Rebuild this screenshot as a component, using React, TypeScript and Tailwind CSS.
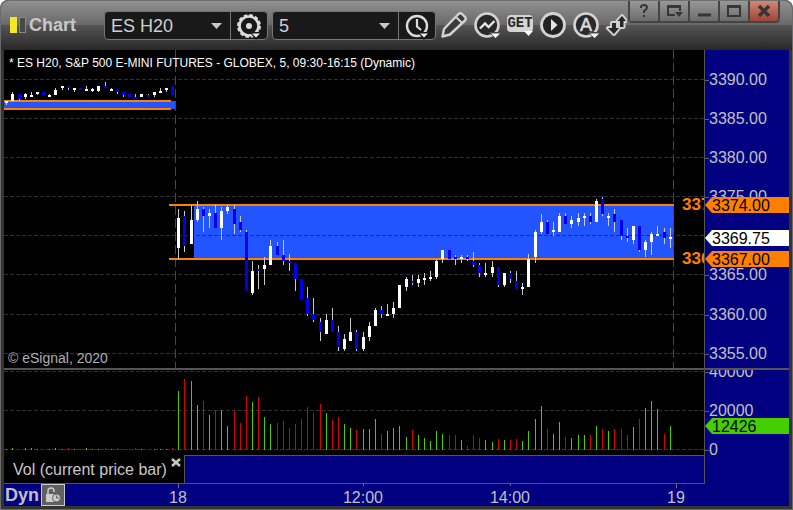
import type { ReactNode } from "react";

type Candle = [x: number, high: number, low: number, top: number, bottom: number, up: number];
type Bar = [x: number, top: number, up: number];

const candles: Candle[] = [
  [6, 101, 105, 101, 103, 1],
  [12, 92, 101, 94, 101, 1],
  [19, 94, 101, 94, 99, 0],
  [25, 93, 99, 94, 97, 1],
  [31, 92, 97, 95, 97, 1],
  [37, 92, 95, 92, 94, 1],
  [43, 92, 95, 92, 95, 0],
  [49, 94, 97, 95, 97, 1],
  [55, 88, 95, 90, 95, 1],
  [62, 86, 90, 86, 88, 1],
  [68, 86, 90, 86, 88, 0],
  [74, 88, 92, 88, 90, 1],
  [80, 88, 90, 88, 90, 0],
  [86, 86, 91, 89, 91, 1],
  [92, 88, 92, 89, 91, 1],
  [98, 86, 92, 86, 91, 1],
  [105, 82, 88, 86, 88, 0],
  [111, 88, 91, 89, 91, 1],
  [117, 90, 94, 90, 92, 0],
  [123, 92, 97, 92, 95, 0],
  [129, 94, 97, 94, 97, 0],
  [135, 94, 99, 97, 99, 0],
  [141, 94, 97, 94, 97, 1],
  [148, 94, 97, 95, 97, 0],
  [154, 92, 97, 92, 95, 1],
  [160, 88, 93, 91, 93, 1],
  [166, 88, 92, 88, 90, 1],
  [172, 86, 95, 86, 95, 0],
  [178, 209, 259, 218, 248, 1],
  [184, 211, 252, 216, 246, 0],
  [191, 205, 244, 220, 244, 1],
  [197, 201, 222, 209, 220, 1],
  [203, 207, 232, 209, 216, 0],
  [209, 209, 228, 213, 216, 1],
  [215, 205, 228, 213, 228, 0],
  [221, 207, 240, 211, 228, 1],
  [227, 205, 214, 207, 211, 1],
  [234, 205, 234, 209, 224, 0],
  [240, 216, 232, 222, 230, 0],
  [246, 230, 291, 232, 291, 0],
  [252, 261, 295, 271, 293, 1],
  [258, 265, 289, 269, 271, 0],
  [264, 257, 285, 265, 269, 1],
  [270, 240, 265, 246, 265, 1],
  [277, 242, 255, 246, 255, 0],
  [283, 240, 265, 255, 261, 0],
  [289, 254, 271, 261, 263, 0],
  [295, 263, 291, 263, 279, 0],
  [301, 279, 300, 279, 300, 0],
  [307, 287, 316, 298, 314, 0],
  [313, 298, 322, 314, 320, 0],
  [320, 318, 341, 322, 332, 0],
  [326, 314, 334, 320, 334, 1],
  [332, 308, 332, 320, 332, 0],
  [338, 326, 351, 332, 347, 0],
  [344, 334, 351, 339, 349, 1],
  [350, 318, 341, 332, 341, 1],
  [356, 330, 351, 332, 349, 0],
  [363, 332, 351, 337, 349, 1],
  [369, 322, 341, 326, 337, 1],
  [375, 308, 326, 310, 326, 1],
  [381, 306, 318, 310, 314, 0],
  [387, 304, 316, 314, 316, 1],
  [393, 302, 318, 308, 314, 1],
  [399, 285, 308, 285, 308, 1],
  [406, 277, 291, 279, 287, 1],
  [412, 275, 285, 281, 283, 0],
  [418, 275, 287, 279, 283, 1],
  [424, 273, 285, 278, 280, 1],
  [430, 271, 281, 277, 279, 1],
  [436, 259, 279, 261, 277, 1],
  [442, 250, 263, 250, 259, 1],
  [449, 250, 259, 250, 259, 0],
  [455, 255, 265, 257, 259, 0],
  [461, 255, 263, 257, 259, 1],
  [467, 255, 261, 257, 259, 0],
  [473, 252, 267, 261, 265, 0],
  [479, 263, 277, 265, 273, 0],
  [485, 263, 277, 273, 275, 1],
  [492, 261, 277, 267, 273, 1],
  [498, 267, 287, 267, 285, 0],
  [504, 273, 287, 273, 285, 1],
  [510, 271, 283, 273, 279, 0],
  [516, 271, 289, 281, 289, 0],
  [522, 283, 295, 287, 289, 1],
  [528, 254, 287, 259, 287, 1],
  [535, 230, 263, 232, 257, 1],
  [541, 214, 234, 222, 232, 1],
  [547, 220, 234, 222, 234, 0],
  [553, 222, 236, 230, 232, 1],
  [559, 213, 232, 216, 232, 1],
  [565, 213, 224, 216, 224, 0],
  [571, 216, 228, 220, 224, 1],
  [578, 213, 226, 218, 222, 1],
  [584, 213, 226, 216, 218, 1],
  [590, 213, 224, 216, 222, 0],
  [596, 199, 222, 201, 222, 1],
  [602, 197, 216, 199, 214, 0],
  [608, 213, 226, 216, 218, 1],
  [614, 209, 232, 214, 222, 0],
  [621, 220, 240, 220, 236, 0],
  [627, 228, 242, 236, 238, 0],
  [633, 226, 244, 226, 240, 1],
  [639, 226, 252, 226, 250, 0],
  [645, 240, 257, 242, 250, 1],
  [651, 232, 255, 234, 242, 1],
  [657, 226, 236, 234, 236, 1],
  [664, 228, 244, 232, 238, 0],
  [670, 228, 248, 237, 239, 1],
];

const volume: Bar[] = [
  [6, 449, 1], [12, 448, 1], [19, 449, 0], [25, 448, 1], [31, 448, 1], [37, 449, 1], [43, 449, 0],
  [49, 449, 1], [55, 448, 1], [62, 449, 1], [68, 448, 0], [74, 449, 1], [80, 449, 0], [86, 448, 1],
  [92, 449, 1], [98, 449, 1], [105, 448, 0], [111, 449, 1], [117, 448, 0], [123, 449, 0], [129, 449, 0],
  [135, 448, 0], [141, 449, 1], [148, 449, 0], [154, 449, 1], [160, 449, 1], [166, 449, 1], [172, 448, 0],
  [178, 391, 1], [184, 379, 0], [191, 381, 1], [197, 405, 1], [203, 401, 0], [209, 415, 1], [215, 410, 0],
  [221, 410, 1], [227, 426, 1], [234, 411, 0], [240, 423, 0], [246, 396, 0], [252, 402, 1], [258, 397, 0],
  [264, 417, 1], [270, 424, 1], [277, 423, 0], [283, 421, 0], [289, 428, 0], [295, 424, 0], [301, 419, 0],
  [307, 407, 0], [313, 413, 0], [320, 404, 0], [326, 413, 1], [332, 420, 0], [338, 417, 0], [344, 424, 1],
  [350, 428, 1], [356, 430, 0], [363, 429, 1], [369, 429, 1], [375, 419, 1], [381, 434, 0], [387, 431, 1],
  [393, 428, 1], [399, 426, 1], [406, 437, 1], [412, 430, 0], [418, 435, 1], [424, 438, 1], [430, 441, 1],
  [436, 431, 1], [442, 434, 1], [449, 435, 0], [455, 435, 0], [461, 440, 1], [467, 446, 0], [473, 435, 0],
  [479, 438, 0], [485, 440, 1], [492, 442, 1], [498, 439, 0], [504, 440, 1], [510, 440, 0], [516, 439, 0],
  [522, 441, 1], [528, 431, 1], [535, 419, 1], [541, 406, 1], [547, 429, 0], [553, 434, 1], [559, 422, 1],
  [565, 437, 0], [571, 438, 1], [578, 435, 1], [584, 435, 1], [590, 435, 0], [596, 426, 1], [602, 429, 0],
  [608, 431, 1], [614, 429, 0], [621, 429, 0], [627, 435, 0], [633, 427, 1], [639, 419, 0], [645, 408, 1],
  [651, 401, 1], [657, 409, 1], [664, 434, 0], [670, 426, 1],
];

const priceTicks: [number, string][] = [
  [79, "3390.00"],
  [118, "3385.00"],
  [157, "3380.00"],
  [196, "3375.00"],
  [235, "3370.00"],
  [274, "3365.00"],
  [314, "3360.00"],
  [353, "3355.00"],
];

const volumeTicks: [number, string][] = [
  [371, "40000"],
  [410, "20000"],
  [449, "0"],
];

type GridProps = { ys: number[] };

const Grid = ({ ys }: GridProps) => (
  <>
    {ys.map((y) => (
      <line key={y} x1="4" x2="704" y1={y + 0.5} y2={y + 0.5} stroke="#303030" strokeDasharray="4 2" />
    ))}
  </>
);

const PricePlot = () => (
  <svg
    className="block h-full w-full"
    viewBox="4 50 700 318"
    preserveAspectRatio="none"
    shapeRendering="crispEdges"
  >
    <rect x="4" y="102" width="167" height="6" fill="#2255ff" />
    <rect x="171" y="101" width="5" height="8" fill="#2255ff" />
    <rect x="194" y="206" width="480" height="52" fill="#2255ff" />
    <Grid ys={priceTicks.map(([y]) => y)} />
    {[175, 673].map((x) => (
      <line key={x} x1={x + 0.5} x2={x + 0.5} y1="50" y2="368" stroke="#484848" strokeDasharray="9 4" />
    ))}
    <g fill="#ff8000">
      <rect x="4" y="100" width="167" height="2" />
      <rect x="4" y="108" width="167" height="2" />
      <rect x="169" y="204" width="505" height="2" />
      <rect x="169" y="258" width="505" height="2" />
    </g>
    {candles.map(([x, high, low, top, bottom, up]) => (
      <g key={x}>
        <rect x={x} y={high} width="1" height={low - high} fill="#c8c8c8" />
        <rect x={x - 1} y={top} width="3" height={bottom - top} fill={up ? "#fff" : "#0000f0"} />
      </g>
    ))}
  </svg>
);

const VolumePlot = () => (
  <svg
    className="block h-full w-full"
    viewBox="4 370 700 85"
    preserveAspectRatio="none"
    shapeRendering="crispEdges"
  >
    <Grid ys={volumeTicks.map(([y]) => y)} />
    {volume.map(([x, top, up]) => (
      <rect key={x} x={x} y={top} width="1" height={450 - top} fill={up ? "#44d000" : "#d80000"} />
    ))}
  </svg>
);

type AxisTag = { y: number; label: string; fill: string };
type AxisProps = { viewBox: string; ticks: [number, string][]; tags: AxisTag[] };

const Axis = ({ viewBox, ticks, tags }: AxisProps) => (
  <svg className="block h-full w-full text-base" viewBox={viewBox} preserveAspectRatio="xMinYMin meet">
    {ticks.map(([y, label]) => (
      <g key={label}>
        <rect x="705" y={y + 1} width="4" height="1" fill="#606060" />
        <text x="709" y={y + 6} fill="#c0c0c0">
          {label}
        </text>
      </g>
    ))}
    {tags.map(({ y, label, fill }) => (
      <g key={label}>
        <path d={`M705 ${y + 8}l7-8h77v16h-77z`} fill={fill} />
        <text x="712" y={y + 14} fill="#000">
          {label}
        </text>
      </g>
    ))}
  </svg>
);

type IconProps = { children: ReactNode; label: string; width?: string };

const ToolButton = ({ children, label, width = "w-8" }: IconProps) => (
  <button aria-label={label} className={`flex h-8 shrink-0 items-center justify-center ${width}`}>
    {children}
  </button>
);

const svgProps = { width: 28, height: 28, viewBox: "0 0 28 28", fill: "none" };

const GearIcon = () => (
  <svg {...svgProps}>
    <circle cx="14" cy="14" r="9.5" stroke="#dcdcdc" strokeWidth="2.600" />
    <circle cx="14" cy="14" r="11" stroke="#dcdcdc" strokeWidth="2" strokeDasharray="3.600 2.160" />
    <circle cx="14" cy="14" r="3" fill="#dcdcdc" />
    <path d="M14.500 20H28l-7 8z" fill="#191919" />
    <path d="M17 21.500h8l-4 4z" fill="#eee" />
  </svg>
);

const ClockIcon = () => (
  <svg {...svgProps}>
    <circle cx="14" cy="14" r="10" stroke="#dcdcdc" strokeWidth="2.400" />
    <path d="M14 7v7.500l4 3.500" stroke="#dcdcdc" strokeWidth="2.200" />
    <path d="M14.500 20H28l-7 8z" fill="#191919" />
    <path d="M17 21.500h8l-4 4z" fill="#eee" />
  </svg>
);

const PencilIcon = () => (
  <svg {...svgProps}>
    <path
      d="M2.500 25.500l1.500-7.500L18.500 3q2-1.500 3.500 0l3 3q1.500 1.500 0 3.500L10 23.500z"
      fill="#3a3a3a"
      stroke="#d4d4d4"
      strokeWidth="2.400"
      strokeLinejoin="round"
    />
    <path d="M16.500 6.500l5.500 5.500" stroke="#d4d4d4" strokeWidth="2" />
  </svg>
);

const StudyIcon = () => (
  <svg {...svgProps}>
    <circle cx="14" cy="14" r="11.500" fill="#2a2a2a" stroke="#d4d4d4" strokeWidth="2.600" />
    <path d="M7 17.500l5-5 3.500 3.500 6-6" stroke="#e8e8e8" strokeWidth="2.400" />
    <path d="M15.500 21H28v2l-5 5z" fill="#484848" />
    <path d="M18 22.500h9l-4.500 4.500z" fill="#fff" />
  </svg>
);

const PlayIcon = () => (
  <svg {...svgProps}>
    <circle cx="14" cy="14" r="11.500" fill="#222" stroke="#d4d4d4" strokeWidth="2.800" />
    <path d="M12 8l6.500 6-6.500 6z" fill="#e4e4e4" />
  </svg>
);

const AlertIcon = () => (
  <svg {...svgProps}>
    <circle cx="14" cy="14" r="11.500" fill="#2a2a2a" stroke="#d4d4d4" strokeWidth="2.600" />
    <text x="14" y="20" textAnchor="middle" fontSize="18" fill="#dcdcdc" stroke="#dcdcdc" strokeWidth="0.600">
      A
    </text>
    <path d="M15.500 21H28v2l-5 5z" fill="#484848" />
    <path d="M18 22.500h9l-4.500 4.500z" fill="#fff" />
  </svg>
);

const swapPath = "M17 4l4 5h-2.500v6H15V9h-2.500zM7 11h4v5h3l-5 6-6-6h4z";

const SwapIcon = () => (
  <svg width="24" height="28" viewBox="-2 -1 24 28" strokeLinejoin="round">
    <path d={swapPath} fill="#d0d0d0" stroke="#d0d0d0" strokeWidth="4" />
    <path d={swapPath} fill="#262626" />
  </svg>
);

type WindowButtonProps = { children: ReactNode; label: string; className?: string };

const WindowButton = ({
  children,
  label,
  className = "border-r-2 bg-linear-to-b from-[#989898] to-[#6c6c6c]",
}: WindowButtonProps) => (
  <button
    aria-label={label}
    className={`flex h-5 w-[30px] items-center justify-center border-[#444] ${className}`}
  >
    <svg width="18" height="16" viewBox="0 0 18 16" fill="none" stroke="#363636" strokeWidth="2">
      {children}
    </svg>
  </button>
);

type PickerProps = { label: string; value: string; action: string; icon: ReactNode };

const Picker = ({ label, value, action, icon }: PickerProps) => (
  <div className="mt-[10px] flex h-[29px] w-[164px] shrink-0 rounded border border-[#777] bg-[#191919]">
    <div className="relative flex-1 border-r border-[#777]">
      <select
        aria-label={label}
        className="h-full w-full appearance-none bg-transparent pl-[6px] text-lg leading-none text-[#d0d0d0]"
      >
        <option>{value}</option>
      </select>
      <svg className="pointer-events-none absolute top-[11px] right-2" width="11" height="6" viewBox="0 0 11 6">
        <path d="M0 0h11L5.500 6z" fill="#c8c8c8" />
      </svg>
    </div>
    <button aria-label={action} className="flex w-9 items-center justify-center">
      {icon}
    </button>
  </div>
);

const Header = () => (
  <header className="flex h-[50px] items-start rounded-t-lg border-t border-[#707070] bg-[linear-gradient(#909090,#686868_50%,#545454_50%,#282828)] pl-[9px]">
    <div className="flex h-12 shrink-0 items-center gap-[2px] text-lg font-bold text-[#c8c8c8]">
      <span className="h-4 w-[7px] bg-[#f5e62a]" />
      <span className="h-4 w-[7px] border border-[#888] bg-[#484848]" />
      <h1 className="ml-[1px] w-[75px]">Chart</h1>
    </div>
    <Picker label="Symbol" value="ES H20" action="Settings" icon={<GearIcon />} />
    <div className="w-1 shrink-0" />
    <Picker label="Interval" value="5" action="Time template" icon={<ClockIcon />} />
    <div className="mt-2 ml-[2px] flex shrink-0 gap-[1px]">
      <ToolButton label="Draw">
        <PencilIcon />
      </ToolButton>
      <ToolButton label="Studies">
        <StudyIcon />
      </ToolButton>
      <ToolButton label="GET">
        <span className="relative mb-[3px] h-[17px] w-[26px] rounded bg-[#d4d4d4] text-center font-['Liberation_Mono',monospace] text-sm leading-[17px] font-bold text-[#2a2a2a]">
          GET
          <svg className="absolute top-4 right-0" width="9" height="5" viewBox="0 0 9 5">
            <path d="M0 0h9L4.500 5z" fill="#fff" />
          </svg>
        </span>
      </ToolButton>
      <ToolButton label="Play">
        <PlayIcon />
      </ToolButton>
      <ToolButton label="Alerts">
        <AlertIcon />
      </ToolButton>
      <ToolButton label="Swap" width="w-6">
        <SwapIcon />
      </ToolButton>
    </div>
    <div className="mr-3 ml-auto flex shrink-0 rounded-b border-b-2 border-l-2 border-[#444]">
      <WindowButton label="Help">
        <path d="M6 5V4q0-2 3-2t3 2.500q0 1.500-3 3.500v2M9 12v2" />
      </WindowButton>
      <WindowButton label="Window menu">
        <path d="M10 12H3V3h12v5" />
        <path d="M2 4h14" />
        <path d="M10 9h8l-4 5z" fill="#363636" stroke="none" />
      </WindowButton>
      <WindowButton label="Minimize">
        <path d="M3 12h13" strokeWidth="3" />
      </WindowButton>
      <WindowButton label="Maximize">
        <path d="M3 3h12v10H3zM3 4h12" />
      </WindowButton>
      <WindowButton label="Close" className="rounded-br border-r-2 bg-linear-to-b from-[#d08878] to-[#a04434]">
        <path d="M4 3l10 10M14 3L4 13" strokeWidth="3.500" />
      </WindowButton>
    </div>
  </header>
);

const App = () => {
  return (
    <div className="rounded-t-lg border-x border-b border-[#6a6a6a] bg-[#333] font-['Liberation_Sans',sans-serif] text-base">
      <Header />
      <main className="border-x-3 border-b-3 border-[#343434] bg-[#000080]">
        <section className="flex h-[318px]">
          <div className="relative flex-1 overflow-hidden bg-black">
            <PricePlot />
            <h2 className="absolute top-[5px] left-[5px] text-xs leading-4 text-white">
              * ES H20, S&amp;P 500 E-MINI FUTURES - GLOBEX, 5, 09:30-16:15 (Dynamic)
            </h2>
            <span className="absolute bottom-0 left-1 text-sm text-[#b0b0b0]">© eSignal, 2020</span>
            <div className="absolute top-[143px] right-0 flex w-[22px] flex-col gap-[30px] overflow-hidden text-[17px] leading-6 font-bold text-[#ff8000]">
              <span>3374.00</span>
              <span>3367.00</span>
            </div>
          </div>
          <div className="w-[85px] shrink-0 border-l border-[#555]">
            <Axis
              viewBox="705 50 84 318"
              ticks={priceTicks.filter(([, label]) => label !== "3370.00")}
              tags={[
                { y: 197, label: "3374.00", fill: "#ff8000" },
                { y: 230, label: "3369.75", fill: "#fff" },
                { y: 251, label: "3367.00", fill: "#ff8000" },
              ]}
            />
          </div>
        </section>
        <div className="h-[2px] bg-[#555]" />
        <section className="flex h-[85px]">
          <div className="flex-1 bg-black">
            <VolumePlot />
          </div>
          <div className="w-[85px] shrink-0 border-l border-[#555]">
            <Axis
              viewBox="705 370 84 85"
              ticks={volumeTicks}
              tags={[{ y: 418, label: "12426", fill: "#44d000" }]}
            />
          </div>
        </section>
        <div className="flex h-[29px]">
          <div className="flex flex-1 border-b border-[#555]">
            <div className="flex w-[180px] shrink-0 items-start bg-black pt-[3px] pl-[9px] text-[#c8c8c8]">
              <span className="whitespace-nowrap">Vol (current price bar)</span>
              <button aria-label="Close study" className="ml-1 shrink-0">
                <svg className="block" width="10" height="9" viewBox="0 0 10 9">
                  <path d="M1 1l8 7M9 1L1 8" stroke="#c8c8c8" strokeWidth="2.500" />
                </svg>
              </button>
            </div>
            <div className="flex-1 border-t border-l border-[#555]" />
          </div>
          <div className="w-[85px] shrink-0 border-l border-[#555]" />
        </div>
        <footer className="relative flex h-[22px] items-start text-[#c0c0c0]">
          <span className="pl-[1px] text-lg leading-[22px] font-bold">Dyn</span>
          <button
            aria-label="Lock time"
            className="ml-[2px] flex h-[22px] w-6 items-center justify-center border border-[#ccc] bg-[#606060]"
          >
            <svg width="18" height="18" viewBox="0 0 18 18" fill="none">
              <path d="M4 9V5a3 3 0 0 1 6 0v1" stroke="#ccc" strokeWidth="1.500" />
              <path d="M2 8h9v8H2z" fill="#ccc" />
              <circle cx="12.500" cy="12" r="4" fill="#ccc" stroke="#606060" />
              <path d="M12.500 9.500V12H15" stroke="#606060" />
            </svg>
          </button>
          <svg
            className="pointer-events-none absolute inset-0 h-full w-full"
            viewBox="4 484 785 22"
            preserveAspectRatio="xMidYMid meet"
          >
            {[
              { x: 178, label: "18", tick: 4 },
              { x: 363, label: "12:00", tick: 2 },
              { x: 510, label: "14:00", tick: 2 },
              { x: 676, label: "19", tick: 4 },
            ].map(({ x, label, tick }) => (
              <g key={label}>
                <rect x={x} y="484" width="1" height={tick} fill="#707070" />
                <text x={x} y="503" textAnchor="middle" fill="#c0c0c0">
                  {label}
                </text>
              </g>
            ))}
          </svg>
        </footer>
      </main>
    </div>
  );
};

export default App;
